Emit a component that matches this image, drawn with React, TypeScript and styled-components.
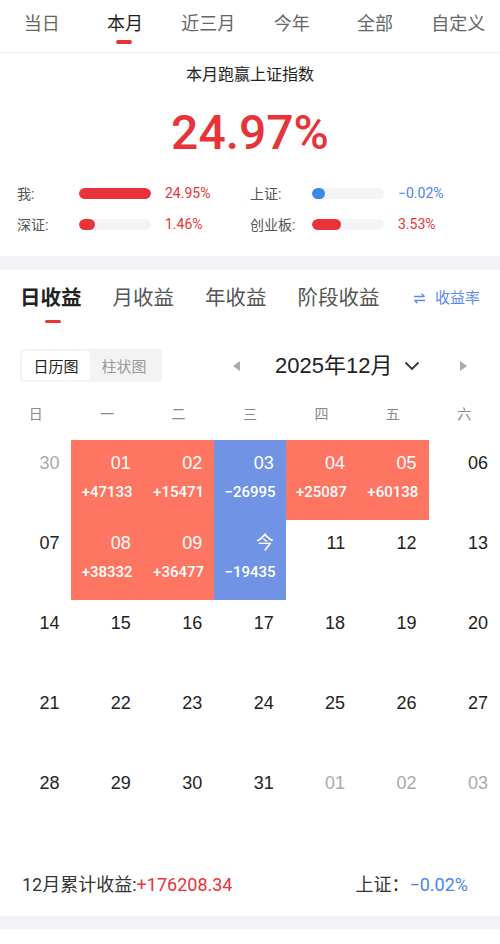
import React from 'react';
import styled, { createGlobalStyle } from 'styled-components';

// page reset + fonts
const GlobalStyle = createGlobalStyle`
  html, body {
    margin: 0;
    padding: 0;
    background: #fff;
  }
  body {
    font-family: Roboto, "Noto Sans CJK SC", sans-serif;
    color: #222;
  }
  * { box-sizing: border-box; }
`;

const RED = '#e9333a';
const BLUE = '#4b82f2';

const Page = styled.div`
  width: 500px;
  background: #fff;
`;

// top period tabs
const PeriodTabs = styled.div`
  display: flex;
  height: 53px;
  border-bottom: 1px solid #eeeeee;
`;

const PeriodTab = styled.div<{ $active?: boolean }>`
  position: relative;
  flex: 1;
  text-align: center;
  padding-top: 12px;
  font-size: 18px;
  line-height: 24px;
  color: ${p => (p.$active ? '#1f1f1f' : '#666')};

  &::after {
    content: '';
    display: ${p => (p.$active ? 'block' : 'none')};
    position: absolute;
    left: 50%;
    top: 40px;
    width: 16px;
    height: 4px;
    margin-left: -9px;
    border-radius: 2px;
    background: ${RED};
  }
`;

// summary block
const Summary = styled.div`
  padding: 12px 0 21px;
`;

const SummaryTitle = styled.div`
  text-align: center;
  font-size: 16px;
  line-height: 20px;
  color: #222;
`;

const BigValue = styled.div`
  text-align: center;
  margin-top: 20px;
  font-family: Roboto, sans-serif;
  font-weight: 500;
  font-size: 48px;
  line-height: 56px;
  color: ${RED};
`;

const StatGrid = styled.div`
  display: grid;
  grid-template-columns: 233px 233px;
  row-gap: 9px;
  padding-left: 17px;
  margin-top: 21px;
`;

const Stat = styled.div`
  display: flex;
  align-items: center;
  height: 22px;
`;

const StatLabel = styled.span`
  width: 62px;
  font-size: 14px;
  color: #555;
`;

const Track = styled.div`
  position: relative;
  width: 72px;
  height: 11px;
  border-radius: 6px;
  background: #f3f4f5;
  overflow: hidden;
`;

const Fill = styled.div<{ $color: string }>`
  height: 100%;
  border-radius: 6px;
  background: ${p => p.$color};
`;

const StatValue = styled.span<{ $color: string }>`
  margin-left: 14px;
  font-size: 14px;
  color: ${p => p.$color};
`;

const Band = styled.div`
  height: 14px;
  background: #f2f3f7;
`;

// income type tabs
const IncomeTabs = styled.div`
  display: flex;
  align-items: flex-start;
  height: 60px;
  padding: 14px 20px 0;
  gap: 31px;
  white-space: nowrap;
`;

const IncomeTab = styled.div<{ $active?: boolean }>`
  position: relative;
  flex-shrink: 0;
  font-size: 20.5px;
  line-height: 28px;
  font-weight: ${p => (p.$active ? 700 : 400)};
  color: ${p => (p.$active ? '#222' : '#555')};

  &::after {
    content: '';
    display: ${p => (p.$active ? 'block' : 'none')};
    position: absolute;
    left: 50%;
    top: 36px;
    width: 16px;
    height: 3px;
    margin-left: -6px;
    border-radius: 2px;
    background: ${RED};
  }
`;

const RateSwitch = styled.div`
  margin-left: auto;
  flex-shrink: 0;
  display: flex;
  align-items: center;
  gap: 9px;
  padding-top: 2px;
  font-size: 15px;
  line-height: 24px;
  color: #5b8ce8;
`;

// controls row
const Controls = styled.div`
  display: flex;
  align-items: center;
  padding: 0 0 0 20px;
  margin-top: 19px;
`;

const Segment = styled.div`
  display: flex;
  width: 142px;
  height: 33px;
  padding: 2px;
  border-radius: 4px;
  background: #f3f3f3;
`;

const SegmentItem = styled.div<{ $active?: boolean }>`
  width: 68px;
  display: flex;
  align-items: center;
  justify-content: center;
  border-radius: 3px;
  font-size: 15px;
  background: ${p => (p.$active ? '#fff' : 'transparent')};
  color: ${p => (p.$active ? '#222' : '#999')};
`;

const MonthNav = styled.div`
  display: flex;
  align-items: center;
  margin-left: 71px;
`;

const Triangle = styled.span<{ $dir: 'left' | 'right' }>`
  width: 0;
  height: 0;
  border-top: 5px solid transparent;
  border-bottom: 5px solid transparent;
  ${p =>
    p.$dir === 'left'
      ? 'border-right: 7px solid #a9a9a9;'
      : 'border-left: 7px solid #a9a9a9;'}
`;

const MonthLabel = styled.span`
  margin-left: 35px;
  font-family: "Liberation Sans", "Noto Sans CJK SC", sans-serif;
  font-size: 22px;
  line-height: 30px;
  color: #222;
`;

const Chevron = styled.svg`
  margin-left: 12px;
  margin-right: 40px;
`;

// calendar
const WeekHeader = styled.div`
  display: grid;
  grid-template-columns: repeat(7, 1fr);
  margin-top: 21px;
`;

const WeekDay = styled.div`
  text-align: center;
  font-size: 14px;
  line-height: 22px;
  color: #8a8a8a;
`;

const CalendarGrid = styled.div`
  display: grid;
  grid-template-columns: repeat(7, 1fr);
  grid-auto-rows: 80px;
  margin-top: 15px;
`;

type Tone = 'up' | 'down' | undefined;

const Cell = styled.div<{ $tone: Tone }>`
  display: flex;
  flex-direction: column;
  padding-top: 12px;
  background: ${p => (p.$tone === 'up' ? '#fe7561' : p.$tone === 'down' ? '#7093e5' : '#fff')};
`;

const DayNum = styled.div<{ $muted?: boolean; $light?: boolean }>`
  text-align: right;
  padding-right: 12px;
  font-family: "Liberation Sans", "Noto Sans CJK SC", sans-serif;
  font-size: 18px;
  line-height: 22px;
  color: ${p => (p.$light ? '#fff' : p.$muted ? '#aaa' : '#222')};
`;

const DayIncome = styled.div`
  margin-top: 8px;
  text-align: center;
  font-family: Roboto, sans-serif;
  font-weight: 500;
  font-size: 15px;
  line-height: 20px;
  color: #fff;
`;

// footer
const Footer = styled.div`
  display: flex;
  align-items: center;
  padding: 33px 32px 0 22px;
  font-size: 18px;
  line-height: 24px;
  color: #333;
`;

const Amount = styled.span<{ $color: string }>`
  font-family: Roboto, sans-serif;
  color: ${p => p.$color};
`;

const FooterRight = styled.span`
  margin-left: auto;
`;

const BottomBand = styled(Band)`
  height: 13px;
  margin-top: 19px;
`;

const BottomSpace = styled.div`
  height: 15px;
`;

const periods = ['当日', '本月', '近三月', '今年', '全部', '自定义'];

const stats = [
  { label: '我:', pct: 100, color: RED, value: '24.95%' },
  { label: '上证:', pct: 18, color: '#3b8aea', value: '−0.02%', valueColor: BLUE },
  { label: '深证:', pct: 22, color: RED, value: '1.46%' },
  { label: '创业板:', pct: 40, color: RED, value: '3.53%' },
];

type Day = { d: string; muted?: boolean; tone?: Tone; income?: string };

const days: Day[] = [
  { d: '30', muted: true },
  { d: '01', tone: 'up', income: '+47133' },
  { d: '02', tone: 'up', income: '+15471' },
  { d: '03', tone: 'down', income: '−26995' },
  { d: '04', tone: 'up', income: '+25087' },
  { d: '05', tone: 'up', income: '+60138' },
  { d: '06' },
  { d: '07' },
  { d: '08', tone: 'up', income: '+38332' },
  { d: '09', tone: 'up', income: '+36477' },
  { d: '今', tone: 'down', income: '−19435' },
  ...['11', '12', '13', '14', '15', '16', '17', '18', '19', '20', '21', '22', '23', '24', '25', '26', '27', '28', '29', '30', '31'].map(d => ({ d })),
  { d: '01', muted: true },
  { d: '02', muted: true },
  { d: '03', muted: true },
];

const SwapIcon = () => (
  <svg width="13" height="11" viewBox="0 0 13 11" fill="none" stroke="#5b8ce8" strokeWidth="1.3">
    <path d="M1 3.5h10.5M8.5 0.8l3 2.7" />
    <path d="M12 7.5H1.5M4.5 10.2l-3-2.7" />
  </svg>
);

export default function App() {
  return (
    <Page>
      <GlobalStyle />
      <PeriodTabs>
        {periods.map(p => (
          <PeriodTab key={p} $active={p === '本月'}>
            {p}
          </PeriodTab>
        ))}
      </PeriodTabs>

      <Summary>
        <SummaryTitle>本月跑赢上证指数</SummaryTitle>
        <BigValue>24.97%</BigValue>
        <StatGrid>
          {stats.map(s => (
            <Stat key={s.label}>
              <StatLabel>{s.label}</StatLabel>
              <Track>
                <Fill $color={s.color} style={{ width: `${s.pct}%` }} />
              </Track>
              <StatValue $color={s.valueColor ?? RED}>{s.value}</StatValue>
            </Stat>
          ))}
        </StatGrid>
      </Summary>

      <Band />

      <IncomeTabs>
        <IncomeTab $active>日收益</IncomeTab>
        <IncomeTab>月收益</IncomeTab>
        <IncomeTab>年收益</IncomeTab>
        <IncomeTab>阶段收益</IncomeTab>
        <RateSwitch>
          <SwapIcon />
          收益率
        </RateSwitch>
      </IncomeTabs>

      <Controls>
        <Segment>
          <SegmentItem $active>日历图</SegmentItem>
          <SegmentItem>柱状图</SegmentItem>
        </Segment>
        <MonthNav>
          <Triangle $dir="left" />
          <MonthLabel>2025年12月</MonthLabel>
          <Chevron width="16" height="10" viewBox="0 0 16 10" fill="none" stroke="#333" strokeWidth="1.8">
            <path d="M1.5 1.5l6.5 6.5 6.5-6.5" />
          </Chevron>
          <Triangle $dir="right" />
        </MonthNav>
      </Controls>

      <WeekHeader>
        {['日', '一', '二', '三', '四', '五', '六'].map(w => (
          <WeekDay key={w}>{w}</WeekDay>
        ))}
      </WeekHeader>

      <CalendarGrid>
        {days.map((day, i) => (
          <Cell key={i} $tone={day.tone}>
            <DayNum $muted={day.muted} $light={!!day.tone}>
              {day.d}
            </DayNum>
            {day.income && <DayIncome>{day.income}</DayIncome>}
          </Cell>
        ))}
      </CalendarGrid>

      <Footer>
        <span>
          12月累计收益:<Amount $color={RED}>+176208.34</Amount>
        </span>
        <FooterRight>
          上证：<Amount $color={BLUE}>−0.02%</Amount>
        </FooterRight>
      </Footer>

      <BottomBand />
      <BottomSpace />
    </Page>
  );
}
